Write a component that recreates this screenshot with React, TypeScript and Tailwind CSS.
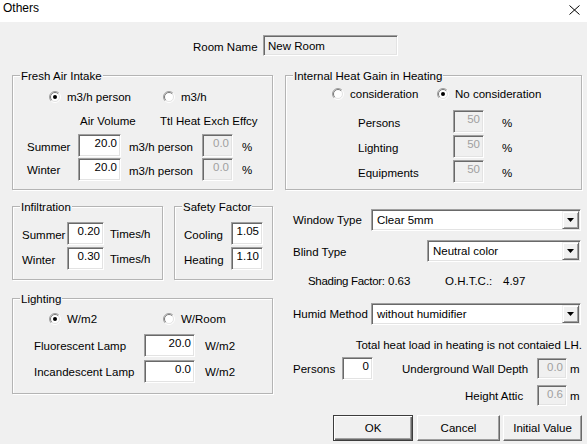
import clsx from "clsx";
import type { ReactNode } from "react";

// classic 3D sunken edge used by edit boxes and combo boxes
const sunken =
  "border border-t-[#a0a0a0] border-l-[#a0a0a0] border-r-white border-b-white shadow-[inset_1px_1px_0_#696969,inset_-1px_-1px_0_#e3e3e3]";

function Field({
  value,
  className,
  disabled = false,
}: {
  value: string;
  className: string;
  disabled?: boolean;
}) {
  return (
    <div
      className={clsx(
        "flex shrink-0 justify-end pr-[3px] pt-[1px] leading-[14px]",
        sunken,
        disabled ? "bg-[#f0f0f0] text-[#a0a0a0]" : "bg-white text-black",
        className,
      )}
    >
      {value}
    </div>
  );
}

function Combo({ value, className }: { value: string; className: string }) {
  return (
    <div className={clsx("flex shrink-0 bg-white", sunken, className)}>
      <div className="flex flex-1 items-center pl-[5px] leading-[14px]">{value}</div>
      <div className="m-[1px] flex w-[17px] items-center justify-center border border-t-[#f0f0f0] border-l-[#f0f0f0] border-r-[#696969] border-b-[#696969] bg-[#f0f0f0] shadow-[inset_1px_1px_0_#fff,inset_-1px_-1px_0_#a0a0a0]">
        <svg width="7" height="4" viewBox="0 0 7 4">
          <path d="M0 0h7L3.5 4z" fill="#000" />
        </svg>
      </div>
    </div>
  );
}

function Radio({
  label,
  checked = false,
  className,
}: {
  label: string;
  checked?: boolean;
  className?: string;
}) {
  return (
    <div className={clsx("flex items-center gap-[6px]", className)}>
      <svg width="12" height="12" viewBox="0 0 12 12" className="shrink-0">
        <circle cx="6" cy="6" r="5" fill="#fff" />
        <path d="M2.1 9.9A5.5 5.5 0 0 1 9.9 2.1" fill="none" stroke="#a0a0a0" />
        <path d="M9.9 2.1A5.5 5.5 0 0 1 2.1 9.9" fill="none" stroke="#fff" />
        <path d="M2.8 9.2A4.5 4.5 0 0 1 9.2 2.8" fill="none" stroke="#7a7a7a" />
        <path d="M9.2 2.8A4.5 4.5 0 0 1 2.8 9.2" fill="none" stroke="#e3e3e3" />
        {checked && <circle cx="6" cy="6" r="2" fill="#000" />}
      </svg>
      <span>{label}</span>
    </div>
  );
}

function GroupBox({
  title,
  className,
  children,
}: {
  title: string;
  className: string;
  children?: ReactNode;
}) {
  return (
    <div
      className={clsx(
        "relative flex shrink-0 flex-col border border-[#b4b4b4] shadow-[inset_1px_1px_0_#fff,1px_1px_0_#fff]",
        className,
      )}
    >
      <span className="absolute -top-[8px] left-[7px] bg-[#f0f0f0] px-[1px] leading-[16px]">
        {title}
      </span>
      {children}
    </div>
  );
}

function Button({
  label,
  className,
  isDefault = false,
}: {
  label: string;
  className: string;
  isDefault?: boolean;
}) {
  return (
    <div
      className={clsx(
        "flex h-[26px] shrink-0 items-center justify-center bg-[#f0f0f0]",
        isDefault
          ? "border border-[#3c3c3c] shadow-[inset_1px_1px_0_#fff,inset_-1px_-1px_0_#696969,inset_-2px_-2px_0_#a0a0a0]"
          : "border border-t-white border-l-white border-r-[#696969] border-b-[#696969] shadow-[inset_-1px_-1px_0_#a0a0a0]",
        className,
      )}
    >
      {label}
    </div>
  );
}

export default function App() {
  return (
    <div className="h-[444px] w-[587px] overflow-hidden whitespace-nowrap bg-[#f0f0f0] font-['Liberation_Sans',Arial,sans-serif] text-[11.5px] leading-[16px] text-black">
      {/* title bar */}
      <div className="flex h-[22px] items-start justify-between bg-white">
        <span className="pl-[3px] text-[12px] leading-[16px]">Others</span>
        <svg className="mr-[7px] mt-[5px]" width="11" height="10" viewBox="0 0 11 10">
          <path d="M0.5 0.5l10 9M10.5 0.5l-10 9" stroke="#000" fill="none" />
        </svg>
      </div>

      <div className="mt-[13px] flex h-[21px] items-center pl-[193px]">
        <span className="w-[70px] pt-[3px]">Room Name</span>
        <div
          className={clsx(
            "flex h-[21px] w-[135px] items-center bg-[#f0f0f0] pl-[4px] leading-[14px]",
            sunken,
          )}
        >
          New Room
        </div>
      </div>

      <div className="mt-[19px] flex pl-[12px]">
        {/* left column */}
        <div className="flex w-[261px] flex-col">
          <GroupBox title="Fresh Air Intake" className="h-[115px] w-[261px]">
            <div className="mt-[13px] flex h-[16px] items-center pl-[36px]">
              <Radio label="m3/h person" checked className="w-[114px]" />
              <Radio label="m3/h" />
            </div>
            <div className="mt-[8px] flex h-[16px] items-center pl-[67px]">
              <span className="w-[80px]">Air Volume</span>
              <span>Ttl Heat Exch Effcy</span>
            </div>
            <div className="mt-[5px] flex h-[23px] items-center pl-[14px]">
              <span className="w-[51px] pt-[2px]">Summer</span>
              <Field value="20.0" className="h-[23px] w-[43px]" />
              <span className="ml-[8px] w-[73px] pt-[3px]">m3/h person</span>
              <Field value="0.0" disabled className="h-[23px] w-[31px]" />
              <span className="ml-[9px] pt-[2px]">%</span>
            </div>
            <div className="mt-[1px] flex h-[23px] items-center pl-[14px]">
              <span className="w-[51px]">Winter</span>
              <Field value="20.0" className="h-[23px] w-[43px]" />
              <span className="ml-[8px] w-[73px] pt-[3px]">m3/h person</span>
              <Field value="0.0" disabled className="h-[23px] w-[31px]" />
              <span className="ml-[9px]">%</span>
            </div>
          </GroupBox>

          <div className="mt-[16px] flex">
            <GroupBox title="Infiltration" className="h-[74px] w-[151px]">
              <div className="mt-[15px] flex flex-col gap-[2px] pl-[9px]">
                <div className="flex h-[23px] items-center">
                  <span className="w-[45px] pt-[2px]">Summer</span>
                  <Field value="0.20" className="h-[23px] w-[37px]" />
                  <span className="ml-[6px]">Times/h</span>
                </div>
                <div className="flex h-[23px] items-center">
                  <span className="w-[45px] pt-[3px]">Winter</span>
                  <Field value="0.30" className="h-[23px] w-[37px]" />
                  <span className="ml-[6px]">Times/h</span>
                </div>
              </div>
            </GroupBox>
            <GroupBox title="Safety Factor" className="ml-[11px] h-[74px] w-[99px]">
              <div className="mt-[15px] flex flex-col gap-[2px] pl-[9px]">
                <div className="flex h-[23px] items-center">
                  <span className="w-[47px] pt-[2px]">Cooling</span>
                  <Field value="1.05" className="h-[23px] w-[32px]" />
                </div>
                <div className="flex h-[23px] items-center">
                  <span className="w-[47px] pt-[2px]">Heating</span>
                  <Field value="1.10" className="h-[23px] w-[32px]" />
                </div>
              </div>
            </GroupBox>
          </div>

          <GroupBox title="Lighting" className="mt-[18px] h-[96px] w-[261px]">
            <div className="mt-[12px] flex h-[16px] items-center pl-[36px]">
              <Radio label="W/m2" checked className="w-[114px]" />
              <Radio label="W/Room" />
            </div>
            <div className="mt-[7px] flex h-[23px] items-center pl-[21px]">
              <span className="w-[110px]">Fluorescent Lamp</span>
              <Field value="20.0" className="h-[23px] w-[51px]" />
              <span className="ml-[10px]">W/m2</span>
            </div>
            <div className="mt-[3px] flex h-[23px] items-center pl-[21px]">
              <span className="w-[110px]">Incandescent Lamp</span>
              <Field value="0.0" className="h-[23px] w-[51px]" />
              <span className="ml-[10px]">W/m2</span>
            </div>
          </GroupBox>
        </div>

        {/* right column */}
        <div className="ml-[12px] flex w-[297px] flex-col">
          <GroupBox title="Internal Heat Gain in Heating" className="h-[115px] w-[297px]">
            <div className="mt-[10px] flex h-[16px] items-center pl-[46px]">
              <Radio label="consideration" className="w-[105px]" />
              <Radio label="No consideration" checked />
            </div>
            <div className="mt-[8px] flex flex-col gap-[2px] pl-[72px]">
              {["Persons", "Lighting", "Equipments"].map((name) => (
                <div key={name} className="flex h-[23px] items-center">
                  <span className="w-[95px] pt-[3px]">{name}</span>
                  <Field value="50" disabled className="h-[23px] w-[31px]" />
                  <span className="ml-[18px] pt-[2px]">%</span>
                </div>
              ))}
            </div>
          </GroupBox>

          <div className="mt-[19px] flex h-[22px] items-center pl-[8px]">
            <span className="w-[78px]">Window Type</span>
            <Combo value="Clear 5mm" className="h-[22px] w-[210px]" />
          </div>
          <div className="mt-[9px] flex h-[22px] items-center pl-[8px]">
            <span className="w-[134px] pt-[2px]">Blind Type</span>
            <Combo value="Neutral color" className="h-[22px] w-[154px]" />
          </div>
          <div className="mt-[11px] flex h-[16px] items-center pl-[23px]">
            <span className="w-[80px] shrink-0 tracking-[-0.3px]">Shading Factor:</span>
            <span className="w-[57px] shrink-0">0.63</span>
            <span className="w-[58px] shrink-0">O.H.T.C.:</span>
            <span>4.97</span>
          </div>
          <div className="mt-[14px] flex h-[22px] items-center pl-[8px]">
            <span className="w-[78px]">Humid Method</span>
            <Combo value="without humidifier" className="h-[22px] w-[210px]" />
          </div>
          <div className="mt-[12px] flex h-[16px] items-center justify-end">
            <span>Total heat load in heating is not contaied LH.</span>
          </div>
          <div className="mt-[4px] flex h-[23px] items-center pl-[8px]">
            <span className="w-[49px]">Persons</span>
            <Field value="0" className="h-[23px] w-[31px]" />
            <span className="ml-[29px] w-[135px]">Underground Wall Depth</span>
            <Field value="0.0" disabled className="h-[21px] w-[30px]" />
            <span className="ml-[3px]">m</span>
          </div>
          <div className="mt-[5px] flex h-[21px] items-center pl-[180px]">
            <span className="w-[72px]">Height Attic</span>
            <Field value="0.6" disabled className="h-[21px] w-[30px]" />
            <span className="ml-[3px]">m</span>
          </div>
          <div className="mt-[9px] flex pl-[48px]">
            <Button label="OK" isDefault className="w-[80px]" />
            <Button label="Cancel" className="ml-[4px] w-[83px]" />
            <Button label="Initial Value" className="ml-[3px] w-[79px]" />
          </div>
        </div>
      </div>
    </div>
  );
}
